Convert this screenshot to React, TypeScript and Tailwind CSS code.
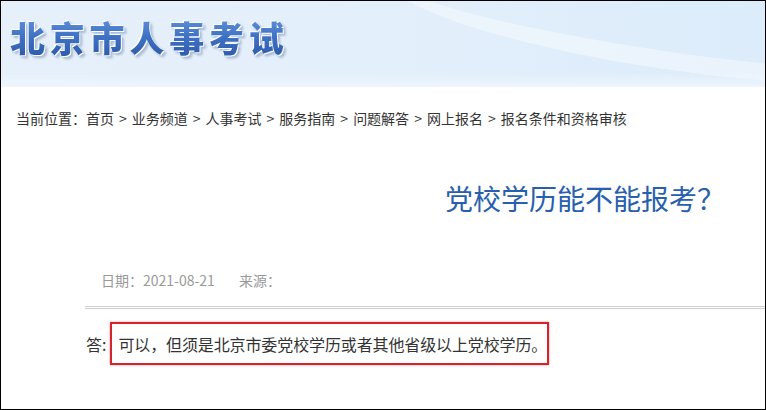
export default function App() {
  const crumbs = ["首页", "业务频道", "人事考试", "服务指南", "问题解答", "网上报名", "报名条件和资格审核"];

  return (
    <div
      className="w-[766px] h-[410px] overflow-hidden bg-white border border-black"
      style={{ fontFamily: '"Microsoft YaHei", "Noto Sans CJK SC", sans-serif' }}
    >
      {/* banner */}
      <div className="relative h-[86px] overflow-hidden bg-gradient-to-r from-[#e6f0fa] via-[#e3effb] to-[#dcecfa]">
        <div className="absolute left-[380px] -top-[40px] w-[600px] h-[110px] rounded-[50%] border-b-[18px] border-white/40 rotate-[8deg]" />
        <div className="absolute left-0 right-0 bottom-0 h-[14px] bg-gradient-to-b from-transparent to-[#eef5fc]" />
        <div className="relative pl-[9px] pt-[14px]">
          <span className="text-[35px] font-black tracking-[4.8px] leading-[44px] bg-gradient-to-b from-[#6d9be0] via-[#3f72c4] to-[#2a55a6] bg-clip-text text-transparent [filter:drop-shadow(1px_1px_0_#fff)_drop-shadow(-1px_-1px_0_#fff)_drop-shadow(2px_2px_1px_rgba(60,90,140,0.35))]">
            北京市人事考试
          </span>
        </div>
      </div>

      {/* breadcrumb */}
      <div className="pl-[15px] pt-[21px] text-[14px] leading-[20px] text-[#333] whitespace-nowrap">
        当前位置：
        {crumbs.map((c, i) => (
          <span key={c}>
            {c}
            {i < crumbs.length - 1 && <span className="mx-[5px]">&gt;</span>}
          </span>
        ))}
      </div>

      {/* article */}
      <div className="pl-[84px]">
        <h1 className="pl-[360px] pt-[51px] text-[28px] leading-[38px] text-[#2860ae] font-normal whitespace-nowrap">
          党校学历能不能报考？
        </h1>

        <div className="pl-[16px] pt-[53px] text-[14px] leading-[20px] text-[#999] whitespace-nowrap">
          日期：2021-08-21<span className="ml-[24px]">来源：</span>
        </div>

        <div className="mt-[16px] h-[3px] border-t border-b border-[#cfcfcf]" />

        <div className="flex items-center pt-[13px] text-[16px] text-[#333] whitespace-nowrap">
          <span className="pl-px">答:</span>
          <div className="ml-[4px] h-[43px] w-[439px] flex items-center pl-[6px] tracking-[-0.12px] border-2 border-[#d6232c] shadow-[0_0_2px_rgba(214,35,44,0.5)]">
            可以，但须是北京市委党校学历或者其他省级以上党校学历。
          </div>
        </div>
      </div>
    </div>
  );
}
